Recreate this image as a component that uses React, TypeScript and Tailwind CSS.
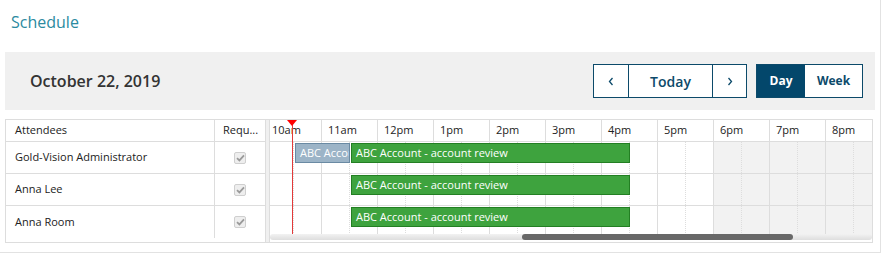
import React from 'react';

const hours = ['10am', '11am', '12pm', '1pm', '2pm', '3pm', '4pm', '5pm', '6pm', '7pm', '8pm'];

const attendees = [
  { name: 'Gold-Vision Administrator', tentative: true },
  { name: 'Anna Lee', tentative: false },
  { name: 'Anna Room', tentative: false },
];

const Check = () => (
  <div className="w-[12px] h-[12px] rounded-[2px] border border-[#cfcfcf] bg-[#eeeeee] flex items-center justify-center">
    <svg width="9" height="8" viewBox="0 0 9 8">
      <path d="M1 4.2 L3.4 6.4 L8 1.4" fill="none" stroke="#9a9a9a" strokeWidth="1.8" />
    </svg>
  </div>
);

const TimelineRow = ({ tentative }: { tentative: boolean }) => (
  <div className="relative h-[32px] border-b border-[#dddddd] flex">
    {hours.map((h, i) => (
      <div
        key={h}
        className={`w-[56px] shrink-0 h-full border-r border-[#dddddd] flex ${i >= 8 ? 'bg-[#f2f2f2]' : ''}`}
      >
        <div className="w-[28px] h-full border-r border-dotted border-[#dddddd]" />
      </div>
    ))}
    {tentative && (
      <div className="absolute left-[29px] top-[1px] w-[55px] h-[20px] bg-[#9cb4c7] border border-[#6a8aa3] text-white text-[11px] leading-[18px] pl-[4px] overflow-hidden whitespace-nowrap">
        ABC Account - account review
      </div>
    )}
    <div className="absolute left-[85px] top-[1px] w-[279px] h-[20px] bg-[#3ea33e] border border-[#237f23] text-white text-[11px] leading-[18px] pl-[4px] overflow-hidden whitespace-nowrap">
      ABC Account - account review
    </div>
  </div>
);

export default function App() {
  return (
    <div className="w-[882px] h-[254px] bg-white font-['Open_Sans',sans-serif] text-[#222]">
      <div className="w-[881px] h-[253px] border-r border-b border-[#e2e2e2]">
        <div className="h-[52px] pl-[11px] pt-[11px] text-[16px] leading-[22px] text-[#2b8aa0]">Schedule</div>

        <div className="ml-[5px] w-[870px] h-[58px] bg-[#f0f0f0] flex items-center justify-between pl-[25px] pr-[12px]">
          <div className="text-[16px] font-semibold text-[#333]">October 22, 2019</div>
          <div className="flex items-center gap-[9px]">
            <div className="flex h-[34px] border border-[#0c4a6a] bg-white text-[#0c4a6a]">
              <button className="w-[35px] flex items-center justify-center border-r border-[#0c4a6a]">
                <svg width="6" height="9" viewBox="0 0 6 9">
                  <path d="M4.5 1 L1.5 4.5 L4.5 8" fill="none" stroke="#0c4a6a" strokeWidth="1.3" />
                </svg>
              </button>
              <button className="w-[84px] flex items-center justify-center border-r border-[#0c4a6a] text-[14px] font-semibold">
                Today
              </button>
              <button className="w-[33px] flex items-center justify-center">
                <svg width="6" height="9" viewBox="0 0 6 9">
                  <path d="M1.5 1 L4.5 4.5 L1.5 8" fill="none" stroke="#0c4a6a" strokeWidth="1.3" />
                </svg>
              </button>
            </div>
            <div className="flex h-[34px] border border-[#0c4a6a] bg-white text-[12px] font-bold">
              <button className="w-[48px] bg-[#03476b] text-white">Day</button>
              <button className="w-[57px] text-[#0c4a6a]">Week</button>
            </div>
          </div>
        </div>

        <div className="mt-[9px] ml-[5px] w-[868px] h-[124px] border border-[#dddddd] flex text-[11px]">
          <div className="w-[259px] shrink-0">
            <div className="flex h-[22px] border-b border-[#dddddd]">
              <div className="w-[209px] border-r border-[#dddddd] pl-[9px] flex items-center">Attendees</div>
              <div className="w-[50px] pl-[8px] flex items-center">Requ...</div>
            </div>
            {attendees.map((a, i) => (
              <div
                key={a.name}
                className={`flex h-[32px] ${i < attendees.length - 1 ? 'border-b border-[#dddddd]' : ''}`}
              >
                <div className="w-[209px] border-r border-[#dddddd] pl-[9px] flex items-center">{a.name}</div>
                <div className="w-[50px] flex items-center justify-center">
                  <Check />
                </div>
              </div>
            ))}
          </div>

          <div className="w-[5px] shrink-0 bg-[#f0f0f0] border-x border-[#dddddd]" />

          <div className="flex-1 overflow-hidden flex flex-col">
            <div className="relative ml-[-4px]">
              <div className="flex h-[22px] border-b border-[#dddddd]">
                {hours.map((h) => (
                  <div key={h} className="w-[56px] shrink-0 border-r border-[#dddddd] pl-[6px] flex items-center">
                    {h}
                  </div>
                ))}
              </div>
              {attendees.map((a) => (
                <TimelineRow key={a.name} tentative={a.tentative} />
              ))}
              <div className="absolute left-[26px] top-[4px] w-px h-[114px] bg-[#e23a3a]" />
              <div className="absolute left-[21px] top-0 w-0 h-0 border-l-[5.5px] border-r-[5.5px] border-t-[6px] border-l-transparent border-r-transparent border-t-[#ff0000]" />
            </div>
            <div className="relative h-[6px] mt-[-4px] rounded-full bg-gradient-to-b from-[#f2f2f2] to-[#dedede]">
              <div className="absolute left-[252px] top-0 h-[6px] w-[271px] rounded-full bg-[#686868]" />
            </div>
          </div>
        </div>
      </div>
    </div>
  );
}
